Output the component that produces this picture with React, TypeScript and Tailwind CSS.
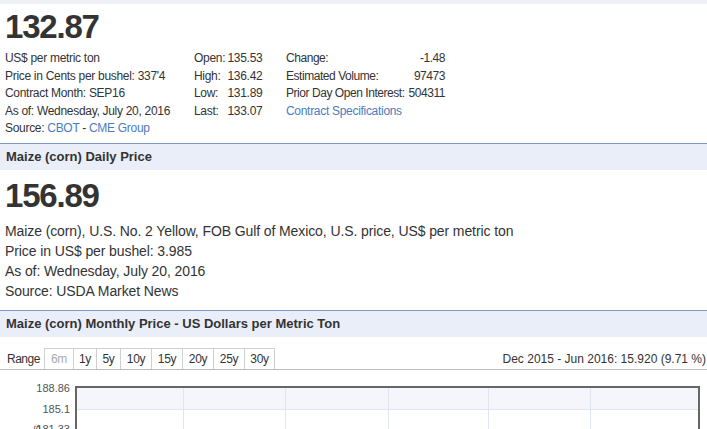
export default function App() {
  const buttons: { label: string; w: string; disabled?: boolean }[] = [
    { label: "6m", w: "w-[29px]", disabled: true },
    { label: "1y", w: "w-[23px]" },
    { label: "5y", w: "w-[24px]" },
    { label: "10y", w: "w-[31px]" },
    { label: "15y", w: "w-[31px]" },
    { label: "20y", w: "w-[31px]" },
    { label: "25y", w: "w-[31px]" },
    { label: "30y", w: "w-[31px]" },
  ];
  return (
    <div className="h-[429px] w-[707px] overflow-hidden bg-white text-[#333] font-['Liberation_Sans',Arial,sans-serif]">
      <div className="h-[4px] bg-[#eef0f6]" />
      <div className="mt-[4px] pl-[5px] text-[33px] leading-[38px] font-bold tracking-[-1.2px]">132.87</div>
      <div className="mt-[4px] flex pl-[5px] text-[12px] leading-[17.5px] tracking-[-0.3px]">
        <div className="w-[189px]">
          <div>US$ per metric ton</div>
          <div>Price in Cents per bushel: 337'4</div>
          <div>Contract Month: SEP16</div>
          <div>As of: Wednesday, July 20, 2016</div>
          <div>
            Source: <span className="text-[#4a7dbf]">CBOT</span> - <span className="text-[#4a7dbf]">CME Group</span>
          </div>
        </div>
        <div className="w-[92px]">
          {[
            ["Open:", "135.53"],
            ["High:", "136.42"],
            ["Low:", "131.89"],
            ["Last:", "133.07"],
          ].map(([l, v]) => (
            <div key={l} className="flex">
              <span className="w-[33.5px]">{l}</span>
              <span>{v}</span>
            </div>
          ))}
        </div>
        <div className="w-[159px] tracking-[-0.45px]">
          {[
            ["Change:", "-1.48"],
            ["Estimated Volume:", "97473"],
            ["Prior Day Open Interest:", "504311"],
          ].map(([l, v]) => (
            <div key={l} className="flex justify-between gap-[3px] whitespace-nowrap">
              <span>{l}</span>
              <span>{v}</span>
            </div>
          ))}
          <div className="text-[#4a7dbf] tracking-[-0.3px]">Contract Specifications</div>
        </div>
      </div>

      <div className="mt-[5.5px] flex h-[27px] items-center border-t border-[#7b97c2] bg-[#eaeef8] pl-[6px] text-[13px] font-bold">
        Maize (corn) Daily Price
      </div>
      <div className="mt-[7px] pl-[5px] text-[33px] leading-[38px] font-bold tracking-[-1.2px]">156.89</div>
      <div className="mt-[6px] pl-[5px] text-[14px] leading-[20px] tracking-[-0.1px]">
        <div>Maize (corn), U.S. No. 2 Yellow, FOB Gulf of Mexico, U.S. price, US$ per metric ton</div>
        <div>Price in US$ per bushel: 3.985</div>
        <div>As of: Wednesday, July 20, 2016</div>
        <div>Source: USDA Market News</div>
      </div>

      <div className="mt-[9px] flex h-[27px] items-center border-t border-[#7b97c2] bg-[#eaeef8] pl-[6px] text-[13px] font-bold">
        Maize (corn) Monthly Price - US Dollars per Metric Ton
      </div>

      <div className="mt-[11px] flex h-[22px] items-stretch border-b border-[#bcbcbc] text-[12px] tracking-[-0.3px]">
        <div className="flex w-[44px] items-center pl-[7px] tracking-[-0.5px]">Range</div>
        <div className="flex">
          {buttons.map((b, i) => (
            <div
              key={b.label}
              className={`${b.w} flex items-center justify-center border-l border-t border-[#cfcfcf] ${i === buttons.length - 1 ? "border-r" : ""} ${b.disabled ? "text-[#aaa]" : "text-[#333]"}`}
            >
              {b.label}
            </div>
          ))}
        </div>
        <div className="ml-auto flex items-center pr-[1px] tracking-[0px]">Dec 2015 - Jun 2016: 15.920 (9.71 %)</div>
      </div>

      <div className="mt-[16px] flex">
        <div className="relative h-[60px] w-[75px] text-[11px] leading-[13px] text-[#555]">
          <span className="absolute right-[5px] top-[-4.5px]">188.86</span>
          <span className="absolute right-[5px] top-[16.5px]">185.1</span>
          <span className="absolute right-[5px] top-[37px]">181.33</span>
          <span className="absolute left-[17px] top-[39px] text-[11px] [writing-mode:vertical-rl] rotate-180">US Dollars per Metric Ton</span>
        </div>
        <div className="relative mr-[7px] h-[60px] flex-1 border-l-2 border-r-2 border-t-2 border-[#666]">
          <svg className="absolute inset-0 h-full w-full">
            <rect x="0" y="0" width="100%" height="21" fill="#f5f6fc" />
            <line x1="0" y1="21.5" x2="100%" y2="21.5" stroke="#dfe6f2" strokeWidth="1" />
            {[106, 208, 311, 411, 513].map((x) => (
              <line key={x} x1={x + 0.5} y1="0" x2={x + 0.5} y2="60" stroke="#dfe6f2" strokeWidth="1" />
            ))}
          </svg>
        </div>
      </div>
    </div>
  );
}
